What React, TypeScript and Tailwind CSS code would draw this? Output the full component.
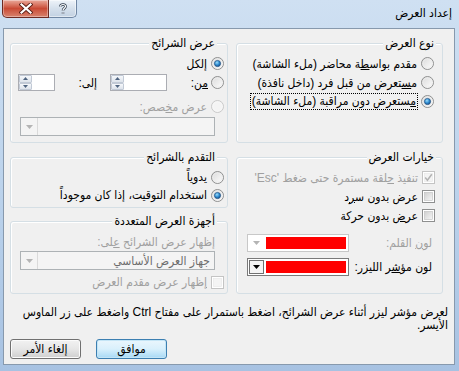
import React from "react";

const font = "font-['Liberation_Sans','DejaVu_Sans_Condensed','DejaVu_Sans',sans-serif]";

function Radio({ checked, disabled }: { checked?: boolean; disabled?: boolean }) {
  return (
    <svg width="13" height="13" viewBox="0 0 13 13" className="shrink-0">
      <defs>
        <linearGradient id="rbFill" x1="0" y1="0" x2="1" y2="1">
          <stop offset="0" stopColor="#d9d9d9" />
          <stop offset="1" stopColor="#ffffff" />
        </linearGradient>
        <radialGradient id="rbDot" cx="0.4" cy="0.35" r="0.7">
          <stop offset="0" stopColor="#9bdcfb" />
          <stop offset="0.55" stopColor="#2e8bd0" />
          <stop offset="1" stopColor="#164c86" />
        </radialGradient>
      </defs>
      <circle cx="6.5" cy="6.5" r="6" fill={disabled ? "#f4f4f4" : "url(#rbFill)"} stroke={disabled ? "#c9c9c9" : "#8e8f8f"} />
      <circle cx="6.5" cy="6.5" r="4.6" fill="none" stroke={disabled ? "#f7f7f7" : "#ececec"} strokeWidth="0.8" />
      {checked && <circle cx="6.5" cy="6.5" r="3.1" fill="url(#rbDot)" stroke="#1f4f80" strokeWidth="0.7" />}
    </svg>
  );
}

function Check({ checked, disabled }: { checked?: boolean; disabled?: boolean }) {
  return (
    <svg width="13" height="13" viewBox="0 0 13 13" className="shrink-0">
      <defs>
        <linearGradient id="cbFill" x1="0" y1="0" x2="1" y2="1">
          <stop offset="0" stopColor="#cfcfcf" />
          <stop offset="1" stopColor="#f6f6f6" />
        </linearGradient>
      </defs>
      <rect x="0.5" y="0.5" width="12" height="12" fill="#fff" stroke={disabled ? "#c4c4c4" : "#8e8f8f"} />
      <rect x="2.5" y="2.5" width="8" height="8" fill={disabled ? "#f4f4f4" : "url(#cbFill)"} stroke={disabled ? "#e6e6e6" : "#bdbdbd"} strokeWidth="0.6" />
      {checked && (
        <path d="M3.2 6.6 L5.4 9.2 L9.8 3.2" fill="none" stroke={disabled ? "#b3b3b3" : "#2a2a2a"} strokeWidth="1.5" />
      )}
    </svg>
  );
}

function Group({ title, className, legend, children }: { title: string; className: string; legend: string; children?: React.ReactNode }) {
  return (
    <div className={`relative rounded-[3px] border border-[#d5dfe5] shadow-[inset_1px_1px_0_#ffffff] ${className}`}>
      <span className={`absolute -top-[8px] whitespace-nowrap bg-[#f0f0f0] px-[2px] leading-[15px] ${legend}`}>{title}</span>
      {children}
    </div>
  );
}

function SpinBtn({ up }: { up?: boolean }) {
  return (
    <div className="flex flex-1 items-center justify-center rounded-[1px] border border-[#c2cad6] bg-gradient-to-b from-[#f6f8fb] to-[#dde3eb]">
      <svg width="5" height="3" viewBox="0 0 5 3">
        <path d={up ? "M0 3 L2.5 0 L5 3 Z" : "M0 0 L5 0 L2.5 3 Z"} fill="#4f6480" />
      </svg>
    </div>
  );
}

function SpinBox({ className }: { className: string }) {
  return (
    <div className={`flex h-[17px] shrink-0 border border-[#abadb3] bg-white ${className}`}>
      <div className="flex-1" />
      <div className="flex w-[13px] flex-col">
        <SpinBtn up />
        <SpinBtn />
      </div>
    </div>
  );
}

function DropArrow({ color }: { color: string }) {
  return (
    <svg width="7" height="4" viewBox="0 0 7 4">
      <path d="M0 0 L7 0 L3.5 4 Z" fill={color} />
    </svg>
  );
}

function DisabledCombo({ text }: { text?: string }) {
  return (
    <div className="flex h-[19px] items-center border border-[#adb2b5] bg-[#f4f4f4]">
      <span className="flex-1 whitespace-nowrap pr-[4px] text-[#6d6d6d]">{text}</span>
      <span className="flex h-full w-[17px] items-center justify-center border-r border-[#dadada]">
        <DropArrow color="#b4b4b4" />
      </span>
    </div>
  );
}

function ColorCombo({ enabled }: { enabled?: boolean }) {
  return (
    <div className={`flex h-[18px] w-[102px] shrink-0 items-stretch border bg-white p-[1px] ${enabled ? "border-[#7a7a7a]" : "border-[#c8c8c8]"}`}>
      <div className="my-[1px] mr-[1px] ml-[2px] flex-1 bg-[#ff0000]" />
      <div className={`flex w-[15px] items-center justify-center ${enabled ? "border border-[#707070] bg-[#f4f4f4]" : ""}`}>
        <DropArrow color={enabled ? "#000000" : "#b4b4b4"} />
      </div>
    </div>
  );
}

function TitleBar() {
  return (
    <div className="flex h-[28px] items-start">
      <div className="ml-[2px] flex h-[18px] w-[47px] items-center justify-center rounded-bl-[5px] border border-t-0 border-[#6d2a22] bg-gradient-to-b from-[#e9a99b] via-[#c94a35] to-[#d7826d] shadow-[inset_0_0_0_1px_rgba(255,255,255,0.35)]">
        <svg width="14" height="11" viewBox="0 0 14 11">
          <path d="M2.5 1.5 L11.5 9.5 M11.5 1.5 L2.5 9.5" stroke="#5a1e15" strokeWidth="4" strokeLinecap="square" />
          <path d="M2.5 1.5 L11.5 9.5 M11.5 1.5 L2.5 9.5" stroke="#ffffff" strokeWidth="2.2" strokeLinecap="square" />
        </svg>
      </div>
      <div className="flex h-[18px] w-[28px] items-center justify-center rounded-br-[5px] border border-t-0 border-l-0 border-[#6f86a3] bg-gradient-to-b from-[#eef3f9] via-[#d5e0ec] to-[#c2d1e2] shadow-[inset_0_0_0_1px_rgba(255,255,255,0.5)]">
        <svg width="8" height="12" viewBox="0 0 8 12">
          <path d="M1.5 3.5 C1.5 0.8 6.5 0.8 6.5 3.5 C6.5 5.2 4 5.5 4 7.5 M4 9.5 L4 10.5" fill="none" stroke="#2e3b4c" strokeWidth="2.6" />
          <path d="M1.5 3.5 C1.5 0.8 6.5 0.8 6.5 3.5 C6.5 5.2 4 5.5 4 7.5 M4 9.5 L4 10.5" fill="none" stroke="#ffffff" strokeWidth="1.2" />
        </svg>
      </div>
      <div className="flex-1" />
      <span dir="rtl" className="mt-[6px] mr-[7px] text-[12px] leading-[15px] text-black">إعداد العرض</span>
    </div>
  );
}

export default function App() {
  const gray = "text-[#a0a0a0]";
  return (
    <div className={`flex h-[371px] w-[459px] flex-col overflow-hidden bg-gradient-to-b from-[#cfe0f2] via-[#bcd3ec] to-[#a7c2e2] text-[12px] text-black ${font}`}>
      <TitleBar />
      <div dir="rtl" className="mr-[4px] mb-[6px] ml-[3px] flex flex-1 flex-col whitespace-nowrap border border-[#8799ad] bg-[#f0f0f0]">
        <div className="flex gap-[8px] pt-[14px] pr-[11px] pl-[6px]">
          {/* right column */}
          <div className="flex w-[207px] flex-col gap-[14px]">
            <Group title="نوع العرض" legend="right-[6px]" className="h-[100px] pt-[10px] pr-[8px]">
              <div className="flex h-[19px] items-center gap-[4px]">
                <Radio />
                <span>مقدم بواس<u>ط</u>ة محاضر (ملء الشاشة)</span>
              </div>
              <div className="flex h-[19px] items-center gap-[4px]">
                <Radio />
                <span>م<u>س</u>تعرض من قبل فرد (داخل نافذة)</span>
              </div>
              <div className="flex h-[19px] items-center gap-[3px]">
                <Radio checked />
                <span className="border border-dotted border-black px-[1px] leading-[15px]"><u>م</u>ستعرض دون مراقبة (ملء الشاشة)</span>
              </div>
            </Group>
            <Group title="خيارات العرض" legend="right-[6px]" className="h-[137px] pt-[10px] pr-[7px]">
              <div className={`flex h-[19px] items-center gap-[4px] ${gray}`}>
                <Check checked disabled />
                <span>تنفيذ <u>ح</u>لقة مستمرة حتى ضغط 'Esc'</span>
              </div>
              <div className="flex h-[19px] items-center gap-[4px]">
                <Check />
                <span>عرض بدون س<u>ر</u>د</span>
              </div>
              <div className="flex h-[19px] items-center gap-[4px]">
                <Check />
                <span>عر<u>ض</u> بدون حركة</span>
              </div>
              <div className="mt-[9px] flex items-center justify-between pr-[3px] pl-[10px]">
                <span className={gray}>لو<u>ن</u> القلم:</span>
                <ColorCombo />
              </div>
              <div className="mt-[6px] flex items-center justify-between pr-[3px] pl-[10px]">
                <span className="tracking-[-0.4px]">لون مؤ<u>ش</u>ر الليزر:</span>
                <ColorCombo enabled />
              </div>
            </Group>
          </div>

          {/* left column */}
          <div className="flex w-[218px] flex-col gap-[14px]">
            <Group title="عرض الشرائح" legend="right-[10px]" className="h-[100px] pt-[10px] pr-[3px] pl-[7px]">
              <div className="flex h-[19px] items-center gap-[4px]">
                <Radio checked />
                <span><u>إ</u>لكل</span>
              </div>
              <div className="flex h-[19px] items-center">
                <Radio />
                <span className="w-[44px] shrink-0 pr-[3px]"><u>م</u>ن:</span>
                <SpinBox className="w-[57px]" />
                <span className="w-[55px] shrink-0 pr-[13px]"><u>إ</u>لى:</span>
                <SpinBox className="w-[37px]" />
              </div>
              <div className={`mt-[5px] flex h-[19px] items-center gap-[4px] ${gray}`}>
                <Radio disabled />
                <span>عرض م<u>خ</u>صص:</span>
              </div>
              <div className="mt-[1px] pr-[9px] pl-[2px]">
                <DisabledCombo />
              </div>
            </Group>
            <div className="flex flex-col gap-[13px]">
              <Group title="التقدم بالشرائح" legend="right-[10px]" className="h-[51px] pt-[10px] pr-[3px]">
                <div className="flex h-[18px] items-center gap-[4px]">
                  <Radio />
                  <span><u>ي</u>دوياً</span>
                </div>
                <div className="flex h-[18px] items-center gap-[4px]">
                  <Radio checked />
                  <span>استخدام التوقيت، إذا كان موجوداً</span>
                </div>
              </Group>
              <Group title="أجهزة العرض المتعددة" legend="right-[10px]" className="h-[73px] pt-[11px] pr-[12px] pl-[9px]">
                <div className={`flex h-[18px] items-center ${gray}`}>
                  <span>إظهار عرض الشرائح <u>ع</u>لى:</span>
                </div>
                <DisabledCombo text="جهاز العرض الأساسي" />
                <div className={`mt-[3px] -mr-[9px] flex h-[18px] items-center gap-[4px] ${gray}`}>
                  <Check disabled />
                  <span><u>إ</u>ظهار عرض مقدم العرض</span>
                </div>
              </Group>
            </div>
          </div>
        </div>

        <p className="mt-[12px] pr-[6px] pl-[20px] leading-[13px]">
          لعرض مؤشر ليزر أثناء عرض الشرائح، اضغط باستمرار على مفتاح Ctrl واضغط على زر الماوس
          <br />
          الأيسر.
        </p>

        <div className="mt-[7px] flex justify-end gap-[15px] pl-[6px]">
          <button className="h-[20px] w-[71px] rounded-[3px] border border-[#3c7fb1] bg-gradient-to-b from-[#eaf6fd] via-[#d9f0fc] to-[#a7d9f5] leading-[18px] shadow-[inset_0_0_0_1px_#c4e5f6]">
            موافق
          </button>
          <button className="h-[20px] w-[71px] rounded-[3px] border border-[#707070] bg-gradient-to-b from-[#f2f2f2] via-[#e6e6e6] to-[#cfcfcf] leading-[18px] shadow-[inset_0_0_0_1px_#fbfbfb]">
            إلغاء الأمر
          </button>
        </div>
      </div>
    </div>
  );
}
